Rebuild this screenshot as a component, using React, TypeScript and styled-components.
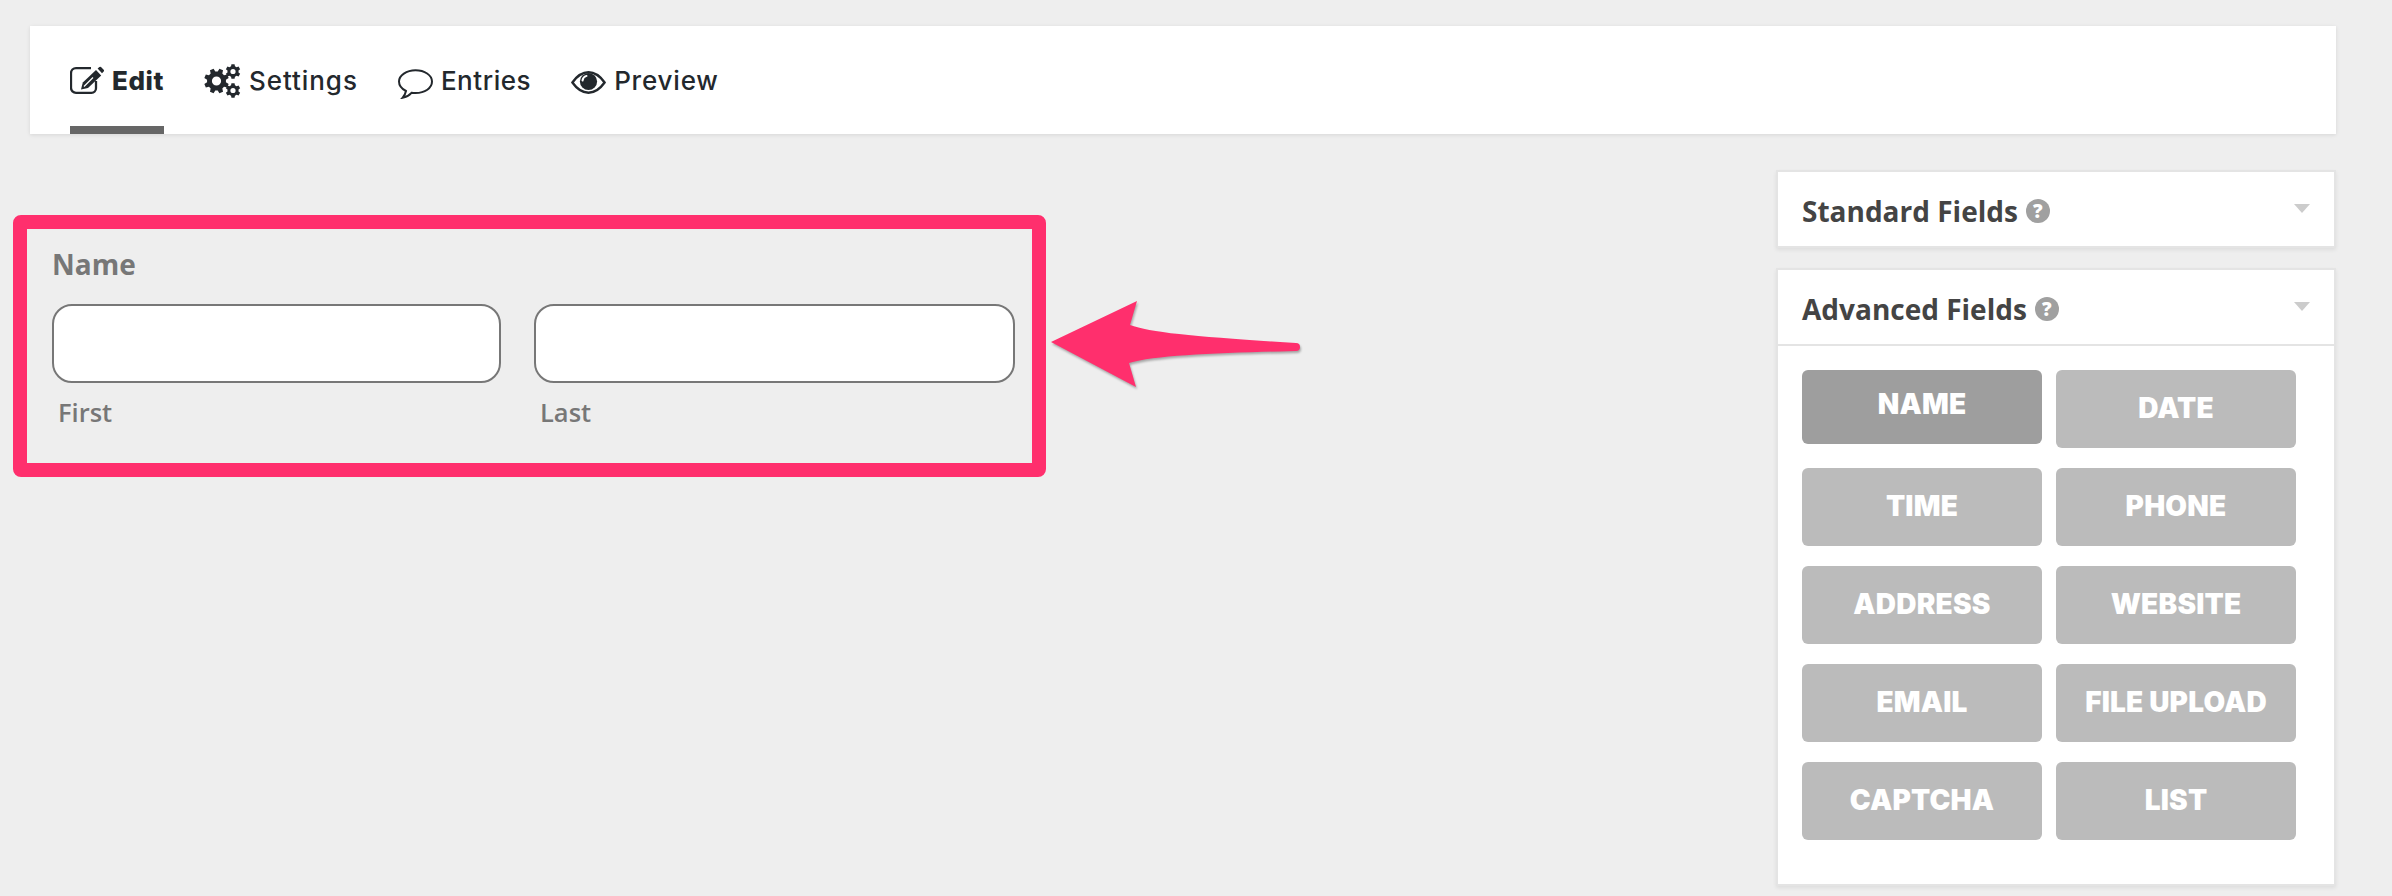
import React from "react";
import styled, { createGlobalStyle } from "styled-components";

const Global = createGlobalStyle`
  html, body { margin: 0; padding: 0; background: #eeeeee; }
  * { box-sizing: border-box; }
`;

const Page = styled.div`
  width: 2392px;
  height: 896px;
  overflow: hidden;
  padding: 26px 56px 0 13px;
  background: #eeeeee;
`;

const Nav = styled.nav`
  margin: 0 0 0 17px;
  height: 108px;
  background: #fff;
  padding: 0 40px;
  display: flex;
  gap: 40px;
  box-shadow: 0 1px 4px rgba(0, 0, 0, 0.1);
`;

const Tab = styled.div<{ $active?: boolean; $spacing: number }>`
  height: 108px;
  padding-top: 28px;
  display: flex;
  align-items: flex-start;
  gap: 8px;
  color: #23282d;
  font-family: Inter, "Liberation Sans", sans-serif;
  font-size: 26px;
  line-height: 54px;
  font-weight: ${(p) => (p.$active ? 800 : 500)};
  letter-spacing: ${(p) => p.$spacing}px;
  border-bottom: ${(p) => (p.$active ? "8px solid #666" : "8px solid transparent")};
  white-space: nowrap;
`;

const TabIcon = styled.svg<{ $top: number }>`
  display: block;
  flex: none;
  margin-top: ${(p) => p.$top}px;
`;

const Main = styled.div`
  display: flex;
  align-items: flex-start;
  justify-content: space-between;
  margin-top: 36px;
`;

const Annotated = styled.div`
  display: flex;
  align-items: flex-start;
  margin-top: 45px;
`;

const Highlight = styled.section`
  width: 1033px;
  height: 262px;
  border: 14px solid #ff2f6d;
  border-radius: 8px;
  padding: 17px 17px 0 25px;
`;

const FieldTitle = styled.div`
  font-family: "Open Sans", "Liberation Sans", sans-serif;
  font-size: 28px;
  line-height: 36px;
  font-weight: 700;
  color: #777;
`;

const Inputs = styled.div`
  display: flex;
  gap: 33px;
  margin-top: 22px;
`;

const Column = styled.div<{ $w: number }>`
  width: ${(p) => p.$w}px;
`;

const Input = styled.div`
  height: 79px;
  background: #fff;
  border: 2px solid #777;
  border-radius: 20px;
`;

const SubLabel = styled.div`
  font-family: "Open Sans", "Liberation Sans", sans-serif;
  font-size: 25.5px;
  line-height: 32px;
  font-weight: 600;
  color: #777;
  margin: 13px 0 0 6px;
`;

const Arrow = styled.svg`
  display: block;
  flex: none;
  margin: 84px 0 0 5px;
  filter: drop-shadow(1px 2px 1px rgba(0, 0, 0, 0.3));
`;

const Sidebar = styled.aside`
  width: 560px;
  display: flex;
  flex-direction: column;
  gap: 20px;
`;

const Panel = styled.div`
  background: #fff;
  border: 2px solid #e4e4e4;
  box-shadow: 0 2px 4px rgba(0, 0, 0, 0.07);
`;

const PanelHead = styled.div`
  height: 74px;
  padding: 3px 24px 0;
  display: flex;
  align-items: center;
  gap: 8px;
  font-family: "Open Sans", "Liberation Sans", sans-serif;
  font-size: 28px;
  font-weight: 700;
  color: #444;
`;

const Caret = styled.span`
  margin-left: auto;
  margin-top: -5px;
  width: 0;
  height: 0;
  border-left: 8px solid transparent;
  border-right: 8px solid transparent;
  border-top: 9px solid #ccc;
`;

const Help = styled.span`
  width: 24px;
  height: 24px;
  border-radius: 50%;
  background: #a0a0a0;
  color: #fff;
  font-size: 19px;
  line-height: 24px;
  font-weight: 800;
  text-align: center;
`;

const Grid = styled.div`
  border-top: 2px solid #e4e4e4;
  padding: 24px 36px 44px 24px;
  display: grid;
  grid-template-columns: 240px 240px;
  column-gap: 14px;
  row-gap: 20px;
  align-items: start;
`;

const FieldButton = styled.div<{ $active?: boolean }>`
  height: ${(p) => (p.$active ? 74 : 78)}px;
  padding-bottom: ${(p) => (p.$active ? 6 : 2)}px;
  background: ${(p) => (p.$active ? "#9e9e9e" : "#bbbbbb")};
  border-radius: 6px;
  display: flex;
  align-items: center;
  justify-content: center;
  color: #fff;
  font-family: Inter, "Liberation Sans", sans-serif;
  font-size: 28px;
  font-weight: 900;
  letter-spacing: 0.2px;
  white-space: nowrap;
`;

const fields = ["NAME", "DATE", "TIME", "PHONE", "ADDRESS", "WEBSITE", "EMAIL", "FILE UPLOAD", "CAPTCHA", "LIST"];

function gear(cx: number, cy: number, ro: number, ri: number, teeth: number, hole: number) {
  const pts: string[] = [];
  const step = (Math.PI * 2) / teeth;
  const point = (r: number, a: number) => `${(cx + r * Math.cos(a)).toFixed(2)} ${(cy + r * Math.sin(a)).toFixed(2)}`;
  for (let i = 0; i < teeth; i++) {
    const a = i * step + step / 2;
    pts.push(point(ri, a - step * 0.34), point(ro, a - step * 0.2), point(ro, a + step * 0.2), point(ri, a + step * 0.34));
  }
  const ring = `M${cx - hole} ${cy}a${hole} ${hole} 0 1 0 ${hole * 2} 0a${hole} ${hole} 0 1 0 ${-hole * 2} 0z`;
  return `M${pts.join("L")}z${ring}`;
}

export default function App() {
  return (
    <>
      <Global />
      <Page>
        <Nav>
          <Tab $active $spacing={0.55}>
            <TabIcon $top={12} width="34" height="28" viewBox="0 0 34 28">
              <path
                d="M21 2.2H6a5 5 0 0 0-5 5v14.6a5 5 0 0 0 5 5h15.5a4.5 4.5 0 0 0 4.5-4.5V15"
                fill="none"
                stroke="#23282d"
                strokeWidth="2.3"
              />
              <path d="M11 23.5l1.8-7L26 4l5.2 5.4L18 22z" fill="#23282d" />
              <path d="M27.6 2.6L29.4 1a1.2 1.2 0 0 1 1.6 0l2.7 2.7a1.2 1.2 0 0 1 0 1.7L32 7.2z" fill="#23282d" />
              <path d="M14 20.5l9-9" stroke="#fff" strokeWidth="1.2" />
            </TabIcon>
            Edit
          </Tab>
          <Tab $spacing={0.95}>
            <TabIcon $top={10} width="37" height="34" viewBox="0 0 37 34">
              <path d={gear(12.5, 17, 12.5, 9.5, 8, 4.6)} fill="#23282d" fillRule="evenodd" />
              <path d={gear(29, 7.5, 7.5, 5.6, 6, 2.6)} fill="#23282d" fillRule="evenodd" />
              <path d={gear(29, 26.5, 7.5, 5.6, 6, 2.6)} fill="#23282d" fillRule="evenodd" />
            </TabIcon>
            Settings
          </Tab>
          <Tab $spacing={0.55}>
            <TabIcon $top={15} width="35" height="30" viewBox="0 0 35 30">
              <path
                d="M17.5 1.2C8.5 1.2 1 6.5 1 12.5c0 4 3 7.5 7 9.5-.5 2.5-1.5 4.5-3.5 6.8 4-.8 7-2.8 9-5 1.3.2 2.8.3 4 .3 9.5 0 16.5-5 16.5-11.5S26.5 1.2 17.5 1.2z"
                fill="none"
                stroke="#23282d"
                strokeWidth="2"
              />
            </TabIcon>
            Entries
          </Tab>
          <Tab $spacing={0.8}>
            <TabIcon $top={17} width="35" height="23" viewBox="0 0 35 23">
              <path
                d="M1.4 11.5C6 5 11 1.3 17.5 1.3S29 5 33.6 11.5C29 18 24 21.7 17.5 21.7S6 18 1.4 11.5z"
                fill="none"
                stroke="#23282d"
                strokeWidth="2.4"
              />
              <circle cx="17.5" cy="10.5" r="8.6" fill="#23282d" />
              <path d="M11.5 9.5a5.5 5.5 0 0 1 4-4.6" fill="none" stroke="#fff" strokeWidth="2" strokeLinecap="round" />
            </TabIcon>
            Preview
          </Tab>
        </Nav>
        <Main>
          <Annotated>
            <Highlight>
              <FieldTitle>Name</FieldTitle>
              <Inputs>
                <Column $w={449}>
                  <Input />
                  <SubLabel>First</SubLabel>
                </Column>
                <Column $w={481}>
                  <Input />
                  <SubLabel>Last</SubLabel>
                </Column>
              </Inputs>
            </Highlight>
            <Arrow width="254" height="92" viewBox="0 0 254 92">
              <path
                d="M0 43L86 2 79 26C100 34 150 38 245 44a4 4 0 0 1 0 8C170 54 105 56 78 64L85 88z"
                fill="#ff2f6d"
              />
            </Arrow>
          </Annotated>
          <Sidebar>
            <Panel>
              <PanelHead>
                Standard Fields <Help>?</Help>
                <Caret />
              </PanelHead>
            </Panel>
            <Panel>
              <PanelHead>
                Advanced Fields <Help>?</Help>
                <Caret />
              </PanelHead>
              <Grid>
                {fields.map((f) => (
                  <FieldButton key={f} $active={f === "NAME"}>
                    {f}
                  </FieldButton>
                ))}
              </Grid>
            </Panel>
          </Sidebar>
        </Main>
      </Page>
    </>
  );
}
